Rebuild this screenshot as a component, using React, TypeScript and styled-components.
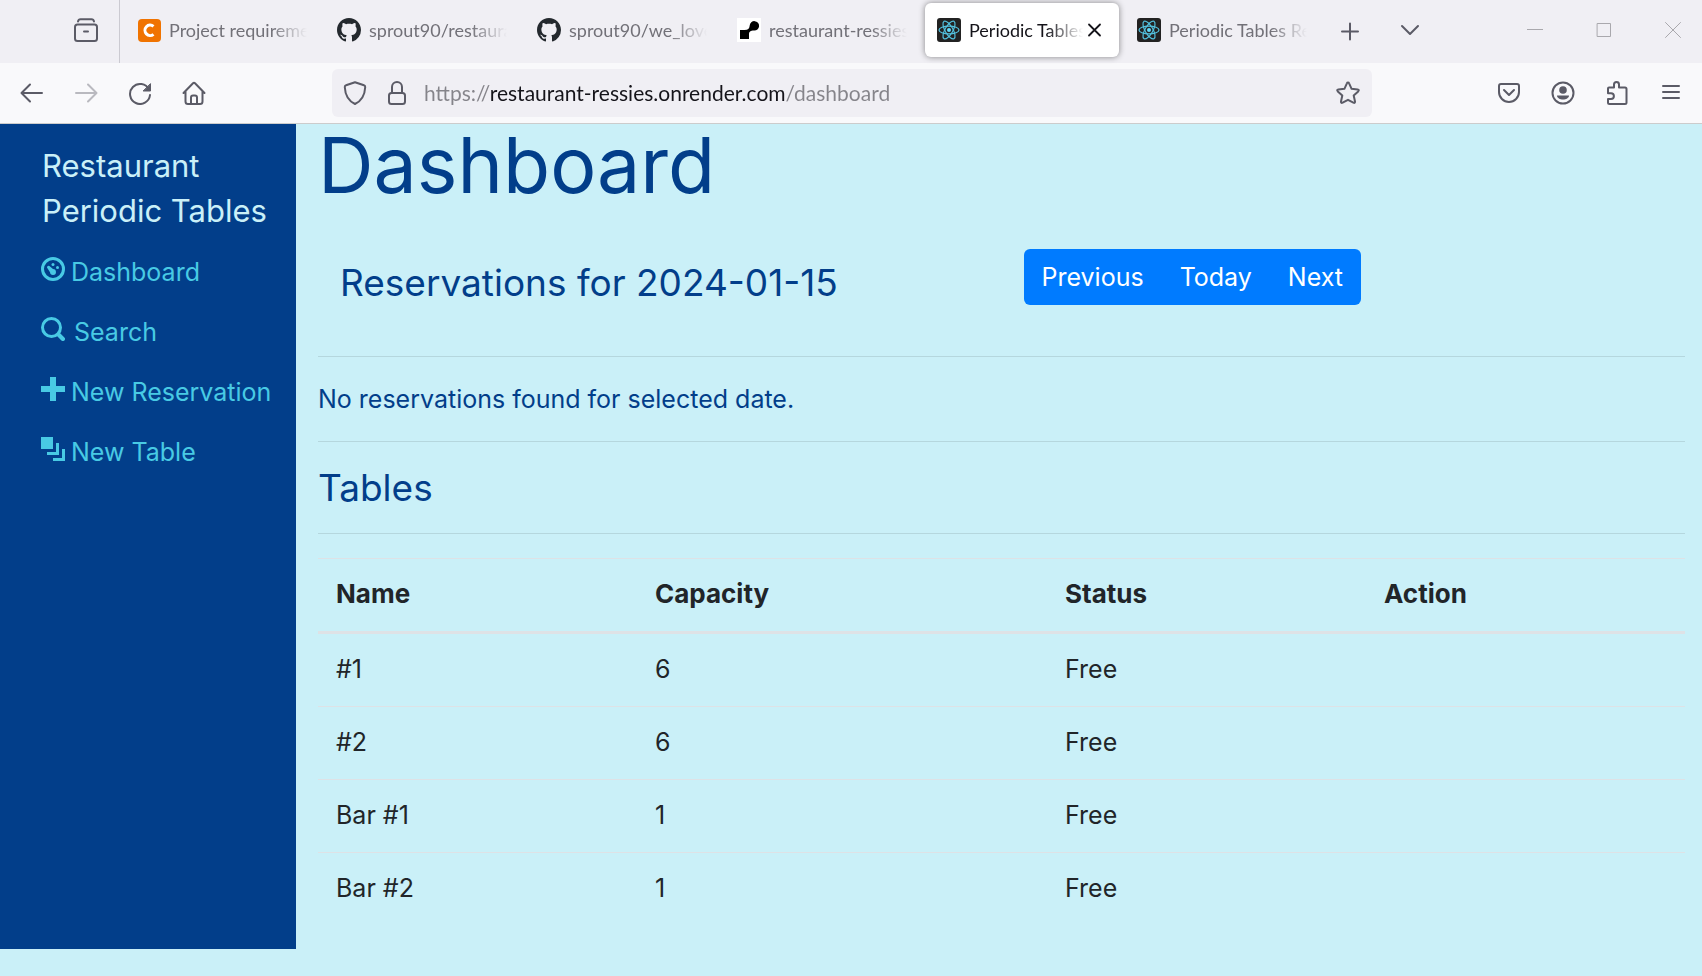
import React from 'react';
import styled, { createGlobalStyle } from 'styled-components';

const ink = '#5b5b66';
const navy = '#023e8a';
const sky = '#48cae4';
const ice = '#caf0f8';

const GlobalStyle = createGlobalStyle`
  *, *::before, *::after { box-sizing: border-box; }
  body {
    margin: 0;
    background: ${ice};
    color: #212529;
    font: 400 25px/36px Inter, "Open Sans", sans-serif;
  }
  button { font: inherit; cursor: pointer; }
  svg { display: block; flex: none; }
`;

/* ---------- browser window ---------- */

const BrowserHeader = styled.header`
  font-family: Lato, "Open Sans", sans-serif;
  border-bottom: 1px solid #cccccc;
`;

const TabStrip = styled.div`
  display: flex;
  align-items: center;
  height: 63px;
  background: #f0eff4;
`;

const RecentArea = styled.div`
  display: flex;
  justify-content: flex-end;
  align-items: center;
  align-self: stretch;
  flex: none;
  width: 120px;
  padding: 0 9px 3px 0;
  border-right: 1px solid #cbcad1;
`;

const IconButton = styled.button<{ $faded?: boolean }>`
  display: flex;
  justify-content: center;
  align-items: center;
  flex: none;
  width: 48px;
  height: 48px;
  padding: 0;
  border: 0;
  border-radius: 6px;
  background: transparent;
  color: ${ink};
  opacity: ${(p) => (p.$faded ? 0.4 : 1)};
`;

const TabList = styled.div`
  display: flex;
  gap: 6px;
  min-width: 0;
  margin: 0 6px 3px 5px;
`;

const TabItem = styled.div<{ $selected?: boolean }>`
  display: flex;
  align-items: center;
  flex: 0 1 194px;
  min-width: 0;
  height: 54px;
  padding: 0 12px;
  border-radius: 6px;
  background: ${(p) => (p.$selected ? '#ffffff' : 'transparent')};
  box-shadow: ${(p) => (p.$selected ? '0 0 6px rgba(0, 0, 0, 0.45)' : 'none')};
  color: ${(p) => (p.$selected ? '#15141a' : '#727178')};
`;

const TabButton = styled.button`
  display: flex;
  align-items: center;
  gap: 8px;
  flex: 1;
  min-width: 0;
  padding: 0;
  border: 0;
  background: transparent;
  color: inherit;
  font-size: 18px;
  line-height: 24px;
`;

const TabLabel = styled.span`
  flex: 1;
  min-width: 0;
  overflow: hidden;
  white-space: nowrap;
  text-align: left;
  mask-image: linear-gradient(to left, transparent, #000 36px);
`;

const TabClose = styled.button`
  display: flex;
  justify-content: center;
  align-items: center;
  flex: none;
  width: 24px;
  height: 24px;
  padding: 0;
  border: 0;
  background: transparent;
  color: #15141a;
`;

const StripActions = styled.div`
  display: flex;
  gap: 12px;
  margin-left: 1px;
`;

const WindowControls = styled.div`
  display: flex;
  margin: 0 0 3px auto;
`;

const WindowButton = styled.button`
  display: flex;
  justify-content: center;
  align-items: center;
  width: 69px;
  height: 48px;
  padding: 0 0 0 11px;
  border: 0;
  background: transparent;
  color: #a9a8ad;
`;

const Toolbar = styled.div`
  display: flex;
  align-items: center;
  height: 60px;
  padding: 0 7px 0 8px;
  background: #f9f9fb;
`;

const ToolbarGroup = styled.nav`
  display: flex;
  gap: 6px;
`;

const AddressBar = styled.form`
  display: flex;
  align-items: center;
  flex: 1;
  min-width: 0;
  height: 48px;
  margin: 0 113px 0 114px;
  border-radius: 6px;
  background: #f0eff4;
  color: ${ink};
`;

const SiteIcons = styled.div`
  display: flex;
  gap: 18px;
  padding: 0 15px 0 11px;
`;

/* The host part of the address is dark; scheme and path are grey. */
const AddressInput = styled.input`
  flex: 1;
  min-width: 0;
  height: 32px;
  padding: 0;
  border: 0;
  outline: 0;
  background: linear-gradient(to right, #85848a 66px, #15141a 66px 361px, #85848a 361px);
  background-clip: text;
  -webkit-background-clip: text;
  color: transparent;
  font: inherit;
  font-size: 21px;
  line-height: 32px;
`;

/* ---------- restaurant page ---------- */

const Page = styled.div`
  display: flex;
`;

const Sidebar = styled.aside`
  flex: none;
  width: 296px;
  padding: 19px 22px 24px 41px;
  background: ${navy};
`;

const Brand = styled.a`
  display: block;
  margin-bottom: 9px;
  padding-left: 1px;
  color: ${ice};
  font-size: 31px;
  line-height: 45px;
  text-decoration: none;
`;

const Menu = styled.ul`
  margin: 0;
  padding: 0;
  list-style: none;
`;

const MenuLink = styled.a<{ $gap?: number }>`
  display: flex;
  align-items: flex-start;
  gap: ${(p) => p.$gap ?? 6}px;
  padding: 12px 0;
  color: ${sky};
  white-space: nowrap;
  text-decoration: none;

  svg { margin-top: 3px; }
`;

const Main = styled.main`
  flex: 1;
  min-width: 0;
  padding: 0 17px 24px 22px;
`;

const Title = styled.h1`
  margin: 0 0 43px;
  color: ${navy};
  font-size: 77px;
  font-weight: 400;
  line-height: 82px;
`;

const SectionTitle = styled.h3`
  margin: 0;
  color: ${navy};
  font-size: 37px;
  font-weight: 400;
  line-height: 43px;
`;

const DateRow = styled.div`
  display: grid;
  grid-template-columns: 1fr 1fr;
  margin-bottom: 51px;
`;

const DateCell = styled.div`
  display: flex;
  align-items: center;
  padding: 0 22px;
  white-space: nowrap;
`;

const DateHeading = styled(SectionTitle)`
  padding-top: 10px;
`;

const ButtonGroup = styled.div`
  display: flex;
  overflow: hidden;
  border-radius: 6px;
  background: #007bff;
`;

const GroupButton = styled.button`
  height: 56px;
  padding: 0 18px;
  border: 0;
  background: transparent;
  color: #ffffff;
`;

const Rule = styled.hr`
  height: 1px;
  margin: 24px 0;
  border: 0;
  background: rgba(0, 0, 0, 0.1);
`;

const Message = styled.p`
  margin: 0;
  color: ${navy};
`;

const DataTable = styled.table`
  width: 100%;
  table-layout: fixed;
  border-collapse: separate;
  border-spacing: 0;
`;

const HeadCell = styled.th<{ $wide?: boolean }>`
  width: ${(p) => (p.$wide ? '30%' : 'auto')};
  padding: 17px 18px 19px;
  border-top: 1px solid #dee2e6;
  border-bottom: 3px solid #dee2e6;
  font-size: 26px;
  font-weight: 700;
  text-align: left;
`;

const Cell = styled.td`
  padding: 17px 18px 19px;

  tr + tr > & { border-top: 1px solid #dee2e6; }
`;

/* ---------- drawings ---------- */

type StrokeProps = { children: React.ReactNode; size?: number; width?: number };

const Stroke = ({ children, size = 24, width = 2 }: StrokeProps) => (
  <svg
    width={size}
    height={size}
    viewBox={`0 0 ${size} ${size}`}
    fill="none"
    stroke="currentColor"
    strokeWidth={width}
    strokeLinecap="round"
    strokeLinejoin="round"
    aria-hidden="true"
  >
    {children}
  </svg>
);

const CourseIcon = () => (
  <svg width="24" height="24" viewBox="0 0 24 24" aria-hidden="true">
    <rect x="1" y="1" width="23" height="23" rx="4" fill="#f07300" />
    <path d="M16.5 8.3a5.2 5.2 0 1 0 0 8" fill="none" stroke="#fff" strokeWidth="3" />
  </svg>
);

const GithubIcon = () => (
  <svg width="24" height="24" viewBox="0 0 16 16" fill="#24292e" aria-hidden="true">
    <path d="M8 0C3.58 0 0 3.58 0 8c0 3.54 2.29 6.53 5.47 7.59.4.07.55-.17.55-.38 0-.19-.01-.82-.01-1.49-2.01.37-2.53-.49-2.69-.94-.09-.23-.48-.94-.82-1.13-.28-.15-.68-.52-.01-.53.63-.01 1.08.58 1.23.82.72 1.21 1.87.87 2.33.66.07-.52.28-.87.51-1.07-1.78-.2-3.64-.89-3.64-3.95 0-.87.31-1.59.82-2.15-.08-.2-.36-1.02.08-2.12 0 0 .67-.21 2.2.82.64-.18 1.32-.27 2-.27s1.36.09 2 .27c1.53-1.04 2.2-.82 2.2-.82.44 1.1.16 1.92.08 2.12.51.56.82 1.27.82 2.15 0 3.07-1.87 3.75-3.65 3.95.29.25.54.73.54 1.48 0 1.07-.01 1.93-.01 2.2 0 .21.15.46.55.38A8.01 8.01 0 0 0 16 8c0-4.42-3.58-8-8-8z" />
  </svg>
);

const RenderIcon = () => (
  <svg width="24" height="24" viewBox="0 0 24 24" aria-hidden="true">
    <rect width="24" height="24" fill="#fff" />
    <path d="M3 12h4.5c3.5 0 5-1.5 5.2-4.5a4.7 4.7 0 1 1 4.3 5c-3.5 0-5 1-5 4v4.5H3z" fill="#000" />
  </svg>
);

const ReactIcon = () => (
  <svg width="24" height="24" viewBox="0 0 24 24" aria-hidden="true">
    <rect width="24" height="24" rx="3" fill="#222" />
    <g fill="none" stroke="#53c1de" strokeWidth="1.2">
      <ellipse cx="12" cy="12" rx="10" ry="3.9" />
      <ellipse cx="12" cy="12" rx="10" ry="3.9" transform="rotate(60 12 12)" />
      <ellipse cx="12" cy="12" rx="10" ry="3.9" transform="rotate(120 12 12)" />
    </g>
    <circle cx="12" cy="12" r="2" fill="#61dafb" />
  </svg>
);

const ArchiveIcon = () => (
  <Stroke>
    <path d="M4 3.5C4.3 2 5 1.2 6.5 1.2h11c1.5 0 2.2.8 2.5 2.3" />
    <rect x="1" y="6.5" width="22" height="16.5" rx="2.5" />
    <path d="M10 13.5h4" />
  </Stroke>
);

const BackIcon = () => (
  <Stroke><path d="M22 12H2M10 3.5L1.5 12l8.5 8.5" /></Stroke>
);

const ForwardIcon = () => (
  <Stroke><path d="M2 12h20M14 3.5l8.5 8.5-8.5 8.5" /></Stroke>
);

const ReloadIcon = () => (
  <Stroke>
    <path d="M21 8.5A10 10 0 1 0 22 14" />
    <path d="M22.5 3v7h-7z" fill="currentColor" strokeWidth="1" />
  </Stroke>
);

const HomeIcon = () => (
  <Stroke>
    <path d="M1.5 12L11 2.3q1-1 2 0L22.5 12M3.5 10.5v10q0 2.5 2.5 2.5h12q2.5 0 2.5-2.5v-10" />
    <path d="M9 22.5v-6q0-2 2-2h2q2 0 2 2v6" />
  </Stroke>
);

const ShieldIcon = () => (
  <Stroke>
    <path d="M12 1.2l9 3q1.3.4 1.2 2C21.8 14.5 18.5 19.8 12 23 5.5 19.8 2.2 14.5 1.8 6.2q-.1-1.6 1.2-2z" />
  </Stroke>
);

const LockIcon = () => (
  <Stroke>
    <rect x="4" y="12" width="16" height="11" rx="2.5" />
    <path d="M7 12V6a5 5 0 0 1 10 0v6" />
  </Stroke>
);

const StarIcon = () => (
  <Stroke>
    <path d="M12 1.5q.8 0 1.1.8l2.5 5.5 6 .7q2 .4.6 1.9l-4.5 4.1 1.3 6q.2 2-1.6 1.2L12 18.8l-5.4 2.9q-1.8.8-1.6-1.2l1.3-6L1.8 10.4Q.4 8.9 2.4 8.5l6-.7 2.5-5.5q.3-.8 1.1-.8z" />
  </Stroke>
);

const PocketIcon = () => (
  <Stroke>
    <path d="M4 3h16q2 0 2 2v6a10 10 0 0 1-20 0V5q0-2 2-2z" />
    <path d="M7 9l5 5 5-5" />
  </Stroke>
);

const AccountIcon = () => (
  <Stroke>
    <circle cx="12" cy="12" r="10.5" />
    <circle cx="12" cy="9" r="3.8" fill="currentColor" stroke="none" />
    <path d="M6 14.5h12c0 2.5-3 4-6 4s-6-1.5-6-4z" fill="currentColor" stroke="none" />
  </Stroke>
);

const PuzzleIcon = () => (
  <Stroke>
    <path d="M3 7.5q0-1 1-1h5V3.5a2.5 2.5 0 0 1 5 0v3h6q1.5 0 1.5 1.5v13.5q0 1.5-1.5 1.5H4.5Q3 23 3 21.5V18h3a2.9 2.9 0 0 0 0-5.8H3z" />
  </Stroke>
);

const MenuIcon = () => (
  <Stroke><path d="M4 5h16M4 11h16M4 17h16" /></Stroke>
);

const PlusIcon = () => (
  <Stroke><path d="M12 3.5v16M4 11.5h16" /></Stroke>
);

const ChevronIcon = () => (
  <Stroke><path d="M4 6l8 8 8-8" /></Stroke>
);

const CloseIcon = () => (
  <Stroke><path d="M6 6.5l11 11M17 6.5l-11 11" strokeWidth="1.8" /></Stroke>
);

const NavGlyph = ({ children }: { children: React.ReactNode }) => (
  <svg width="24" height="24" viewBox="0 0 8 8" fill="currentColor" aria-hidden="true">
    {children}
  </svg>
);

const DialGlyph = () => (
  <NavGlyph>
    <circle cx="4" cy="4" r="3.5" fill="none" stroke="currentColor" />
    <circle cx="4" cy="2.5" r=".5" />
    <circle cx="5.5" cy="3.5" r=".5" />
    <path d="M2.1 3.7a.5.5 0 0 1 .7-.7l1.2 1a1 1 0 1 1-1 1.1z" />
  </NavGlyph>
);

const SearchGlyph = () => (
  <NavGlyph>
    <circle cx="3.5" cy="3.5" r="3" fill="none" stroke="currentColor" />
    <path d="M5.9 5.9l1.4 1.4" stroke="currentColor" strokeWidth="1.4" strokeLinecap="round" />
  </NavGlyph>
);

const PlusGlyph = () => (
  <NavGlyph><path d="M3 0v3H0v2h3v3h2V5h3V3H5V0z" /></NavGlyph>
);

const LayersGlyph = () => (
  <NavGlyph><path d="M0 0v4h4V0zM5 2v3H2v1h4V2zM7 4v3H4v1h4V4z" /></NavGlyph>
);

/* ---------- data ---------- */

const browserTabs = [
  { label: 'Project requirements', Icon: CourseIcon },
  { label: 'sprout90/restaurant', Icon: GithubIcon },
  { label: 'sprout90/we_love', Icon: GithubIcon },
  { label: 'restaurant-ressies', Icon: RenderIcon },
  { label: 'Periodic Tables', Icon: ReactIcon, selected: true },
  { label: 'Periodic Tables Res', Icon: ReactIcon },
];

const menu = [
  { label: 'Dashboard', href: '/dashboard', Glyph: DialGlyph },
  { label: 'Search', href: '/search', Glyph: SearchGlyph, gap: 9 },
  { label: 'New Reservation', href: '/reservations/new', Glyph: PlusGlyph },
  { label: 'New Table', href: '/tables/new', Glyph: LayersGlyph },
];

const tables = [
  { name: '#1', capacity: 6, status: 'Free' },
  { name: '#2', capacity: 6, status: 'Free' },
  { name: 'Bar #1', capacity: 1, status: 'Free' },
  { name: 'Bar #2', capacity: 1, status: 'Free' },
];

export default function App() {
  return (
    <>
      <GlobalStyle />
      <BrowserHeader>
        <TabStrip>
          <RecentArea>
            <IconButton aria-label="Recent browsing"><ArchiveIcon /></IconButton>
          </RecentArea>
          <TabList>
            {browserTabs.map(({ label, Icon, selected }, i) => (
              <TabItem key={i} $selected={selected}>
                <TabButton>
                  <Icon />
                  <TabLabel>{label}</TabLabel>
                </TabButton>
                {selected && <TabClose aria-label="Close tab"><CloseIcon /></TabClose>}
              </TabItem>
            ))}
          </TabList>
          <StripActions>
            <IconButton aria-label="New tab"><PlusIcon /></IconButton>
            <IconButton aria-label="List all tabs"><ChevronIcon /></IconButton>
          </StripActions>
          <WindowControls>
            <WindowButton aria-label="Minimize">
              <Stroke size={16} width={1}><path d="M0 7.5h16" /></Stroke>
            </WindowButton>
            <WindowButton aria-label="Maximize">
              <Stroke size={16} width={1}><path d="M1.5 1.5h13v13h-13z" /></Stroke>
            </WindowButton>
            <WindowButton aria-label="Close window">
              <Stroke size={16} width={1}><path d="M.5.5l15 15M15.5.5l-15 15" /></Stroke>
            </WindowButton>
          </WindowControls>
        </TabStrip>
        <Toolbar>
          <ToolbarGroup aria-label="Navigation">
            <IconButton aria-label="Back"><BackIcon /></IconButton>
            <IconButton aria-label="Forward" $faded><ForwardIcon /></IconButton>
            <IconButton aria-label="Reload"><ReloadIcon /></IconButton>
            <IconButton aria-label="Home"><HomeIcon /></IconButton>
          </ToolbarGroup>
          <AddressBar>
            <SiteIcons>
              <ShieldIcon />
              <LockIcon />
            </SiteIcons>
            <AddressInput
              aria-label="Address"
              defaultValue="https://restaurant-ressies.onrender.com/dashboard"
            />
            <IconButton type="button" aria-label="Bookmark this page"><StarIcon /></IconButton>
          </AddressBar>
          <ToolbarGroup aria-label="Tools">
            <IconButton aria-label="Save to Pocket"><PocketIcon /></IconButton>
            <IconButton aria-label="Account"><AccountIcon /></IconButton>
            <IconButton aria-label="Extensions"><PuzzleIcon /></IconButton>
            <IconButton aria-label="Open menu"><MenuIcon /></IconButton>
          </ToolbarGroup>
        </Toolbar>
      </BrowserHeader>

      <Page>
        <Sidebar>
          <Brand href="/">Restaurant Periodic Tables</Brand>
          <Menu>
            {menu.map(({ label, href, Glyph, gap }) => (
              <li key={href}>
                <MenuLink href={href} $gap={gap}><Glyph />{label}</MenuLink>
              </li>
            ))}
          </Menu>
        </Sidebar>
        <Main>
          <Title>Dashboard</Title>
          <DateRow>
            <DateCell>
              <DateHeading>Reservations for 2024-01-15</DateHeading>
            </DateCell>
            <DateCell>
              <ButtonGroup role="group" aria-label="Date">
                <GroupButton>Previous</GroupButton>
                <GroupButton>Today</GroupButton>
                <GroupButton>Next</GroupButton>
              </ButtonGroup>
            </DateCell>
          </DateRow>
          <Rule />
          <Message>No reservations found for selected date.</Message>
          <Rule />
          <SectionTitle>Tables</SectionTitle>
          <Rule />
          <DataTable>
            <thead>
              <tr>
                <HeadCell scope="col">Name</HeadCell>
                <HeadCell scope="col" $wide>Capacity</HeadCell>
                <HeadCell scope="col">Status</HeadCell>
                <HeadCell scope="col">Action</HeadCell>
              </tr>
            </thead>
            <tbody>
              {tables.map((t) => (
                <tr key={t.name}>
                  <Cell>{t.name}</Cell>
                  <Cell>{t.capacity}</Cell>
                  <Cell>{t.status}</Cell>
                  <Cell />
                </tr>
              ))}
            </tbody>
          </DataTable>
        </Main>
      </Page>
    </>
  );
}
